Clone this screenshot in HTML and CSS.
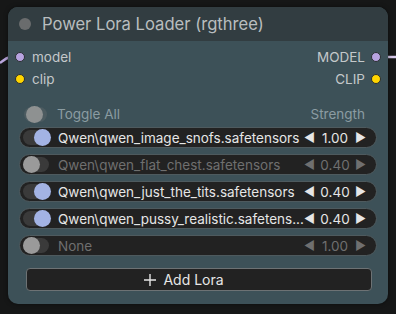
FILE: index.html
```html
<!DOCTYPE html>
<html lang="en">
<head>
    <meta charset="UTF-8">
    <meta name="viewport" content="width=device-width, initial-scale=1.0">
    <title>Power Lora Loader</title>
    <link rel="stylesheet" href="styles.css">
</head>
<body>
    <div class="canvas">
        <svg class="link link-in" width="12" height="40" viewBox="0 0 12 40">
            <path d="M0 8 C4 5 6 3 10 2" stroke="#b9a6dc" stroke-width="2.5" fill="none"/>
        </svg>
        <svg class="link link-out" width="14" height="6" viewBox="0 0 14 6">
            <path d="M0 3 L14 3" stroke="#d6c9ea" stroke-width="2.5" fill="none"/>
        </svg>

        <div class="node">
            <div class="node-title">
                <span class="title-dot"></span>
                <span class="title-text">Power Lora Loader (rgthree)</span>
            </div>
            <div class="node-body">
                <div class="slots">
                    <div class="slot-row">
                        <div class="slot"><span class="dot dot-model"></span>model</div>
                        <div class="slot out">MODEL<span class="dot dot-model"></span></div>
                    </div>
                    <div class="slot-row">
                        <div class="slot"><span class="dot dot-clip"></span>clip</div>
                        <div class="slot out">CLIP<span class="dot dot-clip"></span></div>
                    </div>
                </div>

                <div class="header-row">
                    <span class="toggle toggle-all"><span class="knob"></span></span>
                    <span class="header-label">Toggle All</span>
                    <span class="header-strength">Strength</span>
                </div>

                <div class="lora on">
                    <span class="toggle"><span class="knob"></span></span>
                    <span class="lora-name">Qwen\qwen_image_snofs.safetensors</span>
                    <span class="strength"><span class="arrow">◀</span><span class="value">1.00</span><span class="arrow">▶</span></span>
                </div>
                <div class="lora off">
                    <span class="toggle"><span class="knob"></span></span>
                    <span class="lora-name">Qwen\qwen_flat_chest.safetensors</span>
                    <span class="strength"><span class="arrow">◀</span><span class="value">0.40</span><span class="arrow">▶</span></span>
                </div>
                <div class="lora on">
                    <span class="toggle"><span class="knob"></span></span>
                    <span class="lora-name">Qwen\qwen_just_the_tits.safetensors</span>
                    <span class="strength"><span class="arrow">◀</span><span class="value">0.40</span><span class="arrow">▶</span></span>
                </div>
                <div class="lora on">
                    <span class="toggle"><span class="knob"></span></span>
                    <span class="lora-name">Qwen\qwen_pussy_realistic.safetens...</span>
                    <span class="strength"><span class="arrow">◀</span><span class="value">0.40</span><span class="arrow">▶</span></span>
                </div>
                <div class="lora off">
                    <span class="toggle"><span class="knob"></span></span>
                    <span class="lora-name">None</span>
                    <span class="strength"><span class="arrow">◀</span><span class="value">1.00</span><span class="arrow">▶</span></span>
                </div>

                <button class="add-lora">
                    <svg class="plus" width="12" height="12" viewBox="0 0 12 12">
                        <path d="M6 0 V12 M0 6 H12" stroke="#e6e6e6" stroke-width="1.4" fill="none"/>
                    </svg>
                    Add Lora
                </button>
            </div>
        </div>
    </div>
</body>
</html>
```

FILE: styles.css
```css
body {
    margin: 0;
    background-color: #161717;
    font-family: Inter, "Liberation Sans", sans-serif;
}

.canvas {
    position: relative;
    width: 396px;
    height: 314px;
    overflow: hidden;
}

.link {
    position: absolute;
}

.link-in {
    left: 0;
    top: 55px;
}

.link-out {
    left: 383px;
    top: 54px;
}

.node {
    position: absolute;
    left: 8px;
    top: 7px;
    width: 380px;
    height: 297px;
    border-radius: 10px;
    background: #3d5158;
    overflow: hidden;
    box-shadow: 0 0 4px rgba(0, 0, 0, 0.5);
}

.node-title {
    height: 34px;
    background: #323d41;
    display: flex;
    align-items: center;
    padding-left: 11px;
    gap: 11px;
}

.title-dot {
    width: 12px;
    height: 12px;
    border-radius: 50%;
    background: #6a6c6d;
}

.title-text {
    color: #b9bdbf;
    font-size: 16.6px;
}

.node-body {
    padding: 5px 0 0;
}

.slot-row {
    display: flex;
    justify-content: space-between;
    height: 22px;
    align-items: center;
    font-size: 13.5px;
    color: #c4c8ca;
}

.slot {
    display: flex;
    align-items: center;
    gap: 7px;
    padding-left: 7px;
}

.slot.out {
    padding-left: 0;
    padding-right: 7px;
    gap: 6px;
}

.dot {
    width: 8px;
    height: 8px;
    border-radius: 50%;
    border: 1px solid #2a2f31;
}

.dot-model {
    background: #b7a3e0;
}

.dot-clip {
    background: #ffd500;
}

.header-row {
    display: flex;
    align-items: center;
    height: 22px;
    margin: 13px 0 2px;
    padding: 0 23px 0 16px;
    color: #8b9ca2;
    font-size: 13.5px;
}

.header-label {
    margin-left: 10px;
    flex: 1;
}

.toggle {
    position: relative;
    width: 26px;
    height: 15px;
    border-radius: 8px;
    background: #3a3b3c;
    flex-shrink: 0;
}

.toggle .knob {
    position: absolute;
    top: -1px;
    width: 17px;
    height: 17px;
    border-radius: 50%;
    background: #979797;
}

.toggle-all {
    width: 23px;
    background: #4c5b60;
}

.toggle-all .knob {
    left: 2px;
    background: #8e9191;
}

.lora {
    display: flex;
    align-items: center;
    height: 19px;
    margin: 0 11px 6px 11px;
    padding: 0 10px 0 3px;
    background: #222222;
    border: 1px solid #4e5a5e;
    border-radius: 11px;
    font-size: 13.5px;
    color: #e6e6e6;
}

.lora .toggle {
    background: #3a3a3a;
}

.lora.on .knob {
    left: 11px;
    background: #a3b3e4;
}

.lora.off .knob {
    left: 0;
    background: #9a9a9a;
}

.lora-name {
    margin-left: 9px;
    flex: 1;
    white-space: nowrap;
    overflow: hidden;
}

.lora.off .lora-name,
.lora.off .strength {
    color: #6f6f6f;
}

.strength {
    display: flex;
    align-items: center;
    gap: 5px;
}

.arrow {
    font-size: 12px;
}

.value {
    width: 30px;
    text-align: center;
}

.add-lora {
    display: flex;
    align-items: center;
    justify-content: center;
    gap: 7px;
    width: 346px;
    height: 23px;
    margin: 12px 0 0 18px;
    padding: 0 30px 0 0;
    background: #222222;
    border: 1px solid #6d7274;
    border-radius: 4px;
    color: #e6e6e6;
    font-family: inherit;
    font-size: 14px;
}
```
